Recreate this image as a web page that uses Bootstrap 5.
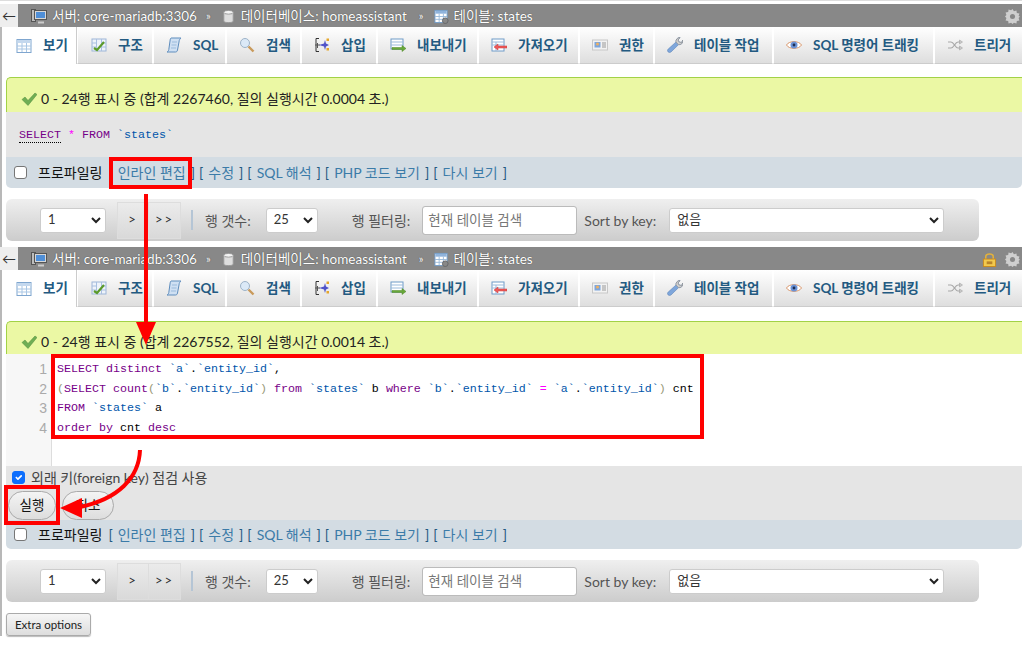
<!DOCTYPE html>
<html lang="ko">
<head>
<meta charset="utf-8">
<title>phpMyAdmin</title>
<link rel="stylesheet" href="https://cdn.jsdelivr.net/npm/bootstrap@5.3.0/dist/css/bootstrap.min.css">
<style>
html,body{height:645px;overflow:hidden;background:#fff}
body{font-family:Lato,"Noto Sans CJK KR",sans-serif;font-size:14px;color:#333;position:relative}
.top-gap{height:4px;background:#fff;border-top:1px solid #ddd}
.crumbs{height:23px;background:#888;color:#fff;font-size:13.5px;white-space:nowrap;text-shadow:0 0 1px #333;padding-top:1px}
.crumb-back{width:18px;height:23px;background:#eee;color:#333;font-size:14px;text-shadow:none;margin-top:-1px}
.crumb-sep{margin:0 10px 0 9px;font-size:11px}
.crumb-item svg{margin-right:5px}
.crumb-first{margin-left:13px}
.crumb-db{margin-right:3px}
.tabs-row{height:37px;border-left:2px solid #b8b8b8;overflow:hidden;white-space:nowrap}
.tab-cell{height:37px;border-right:1px solid #fff;border-left:1px solid #fff;border-bottom:1px solid #ccc;background:linear-gradient(#fff,#dedede);font-weight:700;color:#235a81;font-size:13.5px;flex:none}
.tab-cell.on{background:#fff;border-bottom:0;border-right:1px solid #ccc}
.tab-cell svg{margin-right:11px}
.w1{width:75px;padding-left:13px}.w2{width:76px;padding-left:13px}.w3{width:73px;padding-left:12px}
.w4{width:75px;padding-left:12px}.w5{width:76px;padding-left:12px}.w6{width:101px;padding-left:12px}
.w7{width:101px;padding-left:12px}.w8{width:75px;padding-left:12px}.w9{width:119px;padding-left:12px}
.w10{width:161px;padding-left:12px}.w11{width:100px;padding-left:12px}
.pane-body{border-left:2px solid #b8b8b8;padding-left:4px}
.gap-a{height:13px}.gap-b{height:14px}
.okay{height:35px;background:#ebf8a4;border-top:1px solid #a2d246;border-left:1px solid #a2d246;border-radius:5px 0 0 0;color:#222;padding:7px 0 0 14px;white-space:nowrap}
.okay.two{height:33px}
.okay svg{margin-right:4px}
.sqlbox{height:45px;background:#e5e5e5;padding:14px 0 0 13px}
.code{font-family:"Liberation Mono","Noto Sans CJK KR",monospace;font-size:11.67px;line-height:19.7px;white-space:pre;color:#000}
.kw{color:#708}.kw-u{color:#708;border-bottom:1px dotted #000}.op{color:#f0f}.id{color:#05a}.par{color:#997}
.linkbar{height:31px;background:#d3dce3;border-radius:0 0 5px 5px;padding:0 0 0 8px;color:#235a81;white-space:nowrap}
.linkbar.two{height:29px;padding-bottom:1px}
.linkbar .form-check-input{width:13px;height:13px;margin:0 11px 0 0;border-color:#767676;border-radius:3px}
.prof{color:#111;margin-right:6px}
.lnk{color:#3b7ba8;text-decoration:none;margin:0 5px}
.lnk-set{margin-right:4px}
.navform{height:42px;width:973px;background:linear-gradient(#efefef,#ccc);border-radius:6px;padding-left:34px;color:#555;white-space:nowrap}
.gap-c{height:11px}.gap-d{height:6px}
.navform .form-select{height:25px;min-height:25px;padding:0 0 0 7px;font-size:13px;border-radius:3px;border-color:#ccc;color:#333;background-image:url("data:image/svg+xml,%3csvg xmlns='http://www.w3.org/2000/svg' viewBox='0 0 10 7'%3e%3cpath fill='none' stroke='%23222' stroke-width='2' d='M1 1l4 4 4-4'/%3e%3c/svg%3e");background-size:10px 7px;background-position:right 4px center;flex:none}
.sel-a{width:66px;margin-right:11px}
.navform .sel-b{width:52px;margin:0 34px 0 15px}
.navform .sel-c{width:275px;margin-left:13px}
.pager{height:37px;width:32px;background:linear-gradient(#ebebeb,#d9d9d9);border:1px solid #ddd;color:#333;font-size:13px;letter-spacing:2px;padding:0;border-radius:0}
.pager+.pager{border-left:0}
.vline{width:2px;height:20px;background:#b5c5d5;margin:0 12px 0 10px}
.filter{width:155px;height:29px;margin:0 7px 0 12px;font-size:13.5px;border-radius:3px;padding:0 5px;flex:none;border-color:#bbb}
.filter::placeholder{color:#777}
.editor{height:112px;background:#fff}
.gutter{width:46px;background:#f7f7f7;border-right:1px solid #ddd;color:#aaa;text-align:right;padding:6px 4px 0 0;flex:none;font-family:"Liberation Sans",sans-serif;font-size:14px}
.lines{padding:6px 0 0 5px}
.foot{height:54px;background:#e5e5e5}
.fk{height:25px;padding:0 0 3px 6px;color:#444}
.fk .form-check-input{width:13px;height:13px;margin:0 6px 0 0;border-radius:3px}
.acts{padding-left:2px}
.act{height:29px;width:48px;border-radius:15px;border:1px solid #aaa;background:linear-gradient(#f4f4f4,#ddd);color:#111;font-size:13.5px;padding:0;margin-right:6px}
.act.w52{width:52px}
.extra{height:23px;width:85px;border:1px solid #aaa;background:linear-gradient(#f6f6f6,#ddd);color:#222;font-size:11.5px;padding:0;border-radius:3px;box-shadow:0 1px 1px #bbb}
.marks{position:absolute;left:0;top:0;pointer-events:none}
.icons{position:absolute;width:0;height:0}
.tool-r svg{margin-left:8px}
.tool-r{margin-right:2px}
</style>
</head>
<body>
<svg class="icons" aria-hidden="true">
<symbol id="i-table" viewBox="0 0 16 16"><rect x="1" y="1.500" width="14" height="13" fill="#fff" stroke="#7fa6cf"/><rect x="1.500" y="2" width="13" height="3" fill="#c4d8ee"/><path d="M1 8h14M1 11h14M6 5v9M10.500 5v9" stroke="#a9c6e4" fill="none"/></symbol>
<symbol id="i-struct" viewBox="0 0 16 16"><rect x="1" y="2" width="14" height="12" fill="#eef3fa" stroke="#9db6d8"/><path d="M5.500 2v12M10.500 2v12M1 6h4M1 10h4M11 6h4M11 10h4" stroke="#a9c0e0" fill="none"/><path d="M3 11l3 2 7-8" stroke="#5b9a2b" stroke-width="2.200" fill="none"/></symbol>
<symbol id="i-sql" viewBox="0 0 16 16"><path d="M5 1h10c-1 1-2 2-2 4l-1.500 8c-.3 1.500-1 2-2 2H1c1-.5 1.500-1 1.800-2.500L4 4c.2-1.500.3-2.500 1-3z" fill="#cfe0f3" stroke="#5f8dbd"/><path d="M6 5h5M5.500 8h5M5 11h5" stroke="#9bbbdc"/></symbol>
<symbol id="i-search" viewBox="0 0 16 16"><circle cx="6" cy="6" r="4.500" fill="#dbe9f7" stroke="#9db3c8"/><path d="M9.500 9.500l5 5" stroke="#c99a5b" stroke-width="2.400"/></symbol>
<symbol id="i-insert" viewBox="0 0 16 16"><path d="M5 1.500H2v13h3" stroke="#333" fill="none"/><path d="M1 8h5M3.500 6v5" stroke="#555"/><path d="M11 3l1 3.500 3 1.500-3 1.500-1 3.500-1-3.500L5 8l5-1.500z" fill="#4f52c8"/><rect x="12.500" y="1.500" width="2.500" height="2.500" fill="#e5a72d"/><rect x="12.500" y="11" width="2.500" height="2.500" fill="#e5a72d"/></symbol>
<symbol id="i-export" viewBox="0 0 16 16"><rect x="1" y="2" width="12" height="10" fill="#fff" stroke="#6f9bc8"/><path d="M1 5h12M1 8h12" stroke="#9bbbdc"/><path d="M2 10.500h10V8.500l4 3-4 3v-2H2z" fill="#68a83a" stroke="#4c8626" stroke-width=".5"/></symbol>
<symbol id="i-import" viewBox="0 0 16 16"><rect x="1" y="2" width="12" height="12" fill="#fff" stroke="#6f9bc8"/><path d="M1 5h12M1 8h12M5 5v9" stroke="#9bbbdc"/><path d="M16 9H7V7l-4 3 4 3v-2h9z" fill="#ef5a5a" stroke="#c93a3a" stroke-width=".5"/></symbol>
<symbol id="i-card" viewBox="0 0 16 16"><rect x="0.500" y="3" width="15" height="10" fill="#f2f2f2" stroke="#c8c8c8"/><rect x="2.500" y="5" width="6" height="5.500" fill="#7ea6db"/><circle cx="5.500" cy="7" r="1.500" fill="#f0b060"/><path d="M10 6h4M10 8h4M10 10h4" stroke="#999"/></symbol>
<symbol id="i-wrench" viewBox="0 0 16 16"><path d="M2.500 15.500c-1 0-2-1-2-2 0-.6.300-1 .7-1.400L9 5c-.3-2 1-4.500 4-4.500l-2 2.500 1 2 2.500.5L16 3c.3 3-2 5-4.500 4.700l-7.500 7.300c-.4.300-1 .5-1.500.5z" fill="#7ea6db" stroke="#5f86b8" stroke-width=".6"/><path d="M9 5c-.3-2 1-4.500 4-4.500l-2 2.500 1 2 2.500.5L16 3c.3 3-2 5-4.500 4.700z" fill="#cfcfcf" stroke="#8a8a8a" stroke-width=".6"/></symbol>
<symbol id="i-eye" viewBox="0 0 16 16"><path d="M.5 8C3 3.500 13 3.500 15.500 8 13 12.500 3 12.500.5 8z" fill="#fff" stroke="#d9966a"/><circle cx="8" cy="8" r="3.500" fill="#6c93d6"/><circle cx="8" cy="8" r="1.400" fill="#1d2f55"/></symbol>
<symbol id="i-shuffle" viewBox="0 0 16 16"><path d="M1 5h3c3 0 4 6 7 6h2M1 11h3c3 0 4-6 7-6h2" stroke="#a8a8a8" stroke-width="1.200" fill="none"/><path d="M12.500 3l3 2-3 2zM12.500 9l3 2-3 2z" fill="#ccc" stroke="#999" stroke-width=".5"/></symbol>
<symbol id="i-server" viewBox="0 0 16 16"><rect x="0.500" y="1.500" width="4" height="12" fill="#bdbdbd" stroke="#555"/><rect x="3.500" y="2.500" width="12" height="9" fill="#d7d7d7" stroke="#555"/><rect x="5" y="4" width="9" height="6" fill="#4f8fd8"/><path d="M7 14.500h6" stroke="#ccc" stroke-width="2"/></symbol>
<symbol id="i-db" viewBox="0 0 16 16"><path d="M3 3v10c0 2 10 2 10 0V3z" fill="#dedede" stroke="#999"/><ellipse cx="8" cy="3.500" rx="5" ry="2" fill="#f4f4f4" stroke="#999"/></symbol>
<symbol id="i-tbl2" viewBox="0 0 16 16"><rect x="1" y="1.500" width="13" height="13" fill="#fff" stroke="#6f9bc8"/><rect x="1.500" y="2" width="12" height="3" fill="#8fb3dc"/><path d="M1 8h13M1 11h13M5.500 5v9M10 5v9" stroke="#9bbbdc"/><circle cx="12" cy="12.500" r="3" fill="#888" stroke="#666"/></symbol>
<symbol id="i-gear" viewBox="0 0 16 16"><path d="M8 0l1.500 2.400 2.700-.9.400 2.800 2.800.4-.9 2.700L16 8l-1.500 1.600.9 2.700-2.800.4-.4 2.800-2.700-.9L8 16l-1.500-1.400-2.700.9-.4-2.800-2.800-.4.900-2.700L0 8l1.500-1.600-.9-2.700 2.800-.4.400-2.800 2.700.9z" fill="#cfcfcf"/><circle cx="8" cy="8" r="2.700" fill="#888"/></symbol>
<symbol id="i-lock" viewBox="0 0 16 16"><path d="M4 8V5c0-4 8-4 8 0v3" fill="none" stroke="#e3b23c" stroke-width="1.600"/><rect x="1.500" y="7.500" width="13" height="8" fill="#f2c94c" stroke="#c98a1e"/><rect x="5" y="10" width="6" height="3" fill="#b9842a"/></symbol>
<symbol id="i-ok" viewBox="0 0 16 16"><path d="M1 8.500l3-2.500 3 3.500L14 2l2 1.500-9 11z" fill="#6fae54" stroke="#4f8a3a" stroke-width=".5"/></symbol>
</svg>

<div class="top-gap"></div>
<div class="crumbs d-flex align-items-center">
  <div class="crumb-back d-flex align-items-center justify-content-center">←</div>
  <div class="crumb-item crumb-first d-flex align-items-center"><svg width="16" height="16"><use href="#i-server"/></svg>서버: core-mariadb:3306</div>
  <span class="crumb-sep">»</span>
  <div class="crumb-item crumb-db d-flex align-items-center"><svg width="15" height="15"><use href="#i-db"/></svg>데이터베이스: homeassistant</div>
  <span class="crumb-sep">»</span>
  <div class="crumb-item d-flex align-items-center"><svg width="15" height="15"><use href="#i-tbl2"/></svg>테이블: states</div>
  <div class="tool-r ms-auto d-flex align-items-center"><svg width="15" height="15"><use href="#i-gear"/></svg></div>
</div>
<nav class="tabs-row d-flex">
  <div class="tab-cell on w1 d-flex align-items-center"><svg width="16" height="16"><use href="#i-table"/></svg>보기</div>
  <div class="tab-cell w2 d-flex align-items-center"><svg width="16" height="16"><use href="#i-struct"/></svg>구조</div>
  <div class="tab-cell w3 d-flex align-items-center"><svg width="16" height="16"><use href="#i-sql"/></svg>SQL</div>
  <div class="tab-cell w4 d-flex align-items-center"><svg width="16" height="16"><use href="#i-search"/></svg>검색</div>
  <div class="tab-cell w5 d-flex align-items-center"><svg width="16" height="16"><use href="#i-insert"/></svg>삽입</div>
  <div class="tab-cell w6 d-flex align-items-center"><svg width="16" height="16"><use href="#i-export"/></svg>내보내기</div>
  <div class="tab-cell w7 d-flex align-items-center"><svg width="16" height="16"><use href="#i-import"/></svg>가져오기</div>
  <div class="tab-cell w8 d-flex align-items-center"><svg width="16" height="16"><use href="#i-card"/></svg>권한</div>
  <div class="tab-cell w9 d-flex align-items-center"><svg width="16" height="16"><use href="#i-wrench"/></svg>테이블 작업</div>
  <div class="tab-cell w10 d-flex align-items-center"><svg width="16" height="16"><use href="#i-eye"/></svg>SQL 명령어 트래킹</div>
  <div class="tab-cell w11 d-flex align-items-center"><svg width="16" height="16"><use href="#i-shuffle"/></svg>트리거</div>
</nav>
<div class="pane-body">
  <div class="gap-a"></div>
  <div class="okay d-flex align-items-center"><svg width="16" height="16"><use href="#i-ok"/></svg>0 - 24행 표시 중 (합계 2267460, 질의 실행시간 0.0004 초.)</div>
  <div class="sqlbox code"><span class="kw-u">SELECT</span> <span class="op">*</span> <span class="kw">FROM</span> <span class="id">`states`</span></div>
  <div class="linkbar d-flex align-items-center"><input class="form-check-input" type="checkbox" aria-label="프로파일링"><span class="prof">프로파일링</span><span class="lnk-set">[<a class="lnk" href="#">인라인 편집</a>]</span><span class="lnk-set">[<a class="lnk" href="#">수정</a>]</span><span class="lnk-set">[<a class="lnk" href="#">SQL 해석</a>]</span><span class="lnk-set">[<a class="lnk" href="#">PHP 코드 보기</a>]</span><span class="lnk-set">[<a class="lnk" href="#">다시 보기</a>]</span></div>
  <div class="gap-c"></div>
  <div class="navform d-flex align-items-center">
    <select class="form-select sel-a" aria-label="페이지"><option>1</option></select>
    <button class="pager" type="button">&gt;</button><button class="pager" type="button">&gt;&gt;</button>
    <span class="vline"></span><span>행 갯수:</span>
    <select class="form-select sel-b" aria-label="행 갯수"><option>25</option></select>
    <span>행 필터링:</span>
    <input class="form-control filter" placeholder="현재 테이블 검색">
    <span>Sort by key:</span>
    <select class="form-select sel-c" aria-label="Sort by key"><option>없음</option></select>
  </div>
  <div class="gap-d"></div>
</div>

<div class="crumbs d-flex align-items-center">
  <div class="crumb-back d-flex align-items-center justify-content-center">←</div>
  <div class="crumb-item crumb-first d-flex align-items-center"><svg width="16" height="16"><use href="#i-server"/></svg>서버: core-mariadb:3306</div>
  <span class="crumb-sep">»</span>
  <div class="crumb-item crumb-db d-flex align-items-center"><svg width="15" height="15"><use href="#i-db"/></svg>데이터베이스: homeassistant</div>
  <span class="crumb-sep">»</span>
  <div class="crumb-item d-flex align-items-center"><svg width="15" height="15"><use href="#i-tbl2"/></svg>테이블: states</div>
  <div class="tool-r ms-auto d-flex align-items-center"><svg width="15" height="15"><use href="#i-lock"/></svg><svg width="15" height="15"><use href="#i-gear"/></svg></div>
</div>
<nav class="tabs-row d-flex">
  <div class="tab-cell on w1 d-flex align-items-center"><svg width="16" height="16"><use href="#i-table"/></svg>보기</div>
  <div class="tab-cell w2 d-flex align-items-center"><svg width="16" height="16"><use href="#i-struct"/></svg>구조</div>
  <div class="tab-cell w3 d-flex align-items-center"><svg width="16" height="16"><use href="#i-sql"/></svg>SQL</div>
  <div class="tab-cell w4 d-flex align-items-center"><svg width="16" height="16"><use href="#i-search"/></svg>검색</div>
  <div class="tab-cell w5 d-flex align-items-center"><svg width="16" height="16"><use href="#i-insert"/></svg>삽입</div>
  <div class="tab-cell w6 d-flex align-items-center"><svg width="16" height="16"><use href="#i-export"/></svg>내보내기</div>
  <div class="tab-cell w7 d-flex align-items-center"><svg width="16" height="16"><use href="#i-import"/></svg>가져오기</div>
  <div class="tab-cell w8 d-flex align-items-center"><svg width="16" height="16"><use href="#i-card"/></svg>권한</div>
  <div class="tab-cell w9 d-flex align-items-center"><svg width="16" height="16"><use href="#i-wrench"/></svg>테이블 작업</div>
  <div class="tab-cell w10 d-flex align-items-center"><svg width="16" height="16"><use href="#i-eye"/></svg>SQL 명령어 트래킹</div>
  <div class="tab-cell w11 d-flex align-items-center"><svg width="16" height="16"><use href="#i-shuffle"/></svg>트리거</div>
</nav>
<div class="pane-body">
  <div class="gap-b"></div>
  <div class="okay two d-flex align-items-center"><svg width="16" height="16"><use href="#i-ok"/></svg>0 - 24행 표시 중 (합계 2267552, 질의 실행시간 0.0014 초.)</div>
  <div class="editor d-flex code">
    <div class="gutter">1
2
3
4</div>
    <div class="lines"><span class="kw">SELECT</span> <span class="kw">distinct</span> <span class="id">`a`</span>.<span class="id">`entity_id`</span>,
<span class="par">(</span><span class="kw">SELECT</span> <span class="kw">count</span><span class="par">(</span><span class="id">`b`</span>.<span class="id">`entity_id`</span><span class="par">)</span> <span class="kw">from</span> <span class="id">`states`</span> b <span class="kw">where</span> <span class="id">`b`</span>.<span class="id">`entity_id`</span> <span class="op">=</span> <span class="id">`a`</span>.<span class="id">`entity_id`</span><span class="par">)</span> cnt
<span class="kw">FROM</span> <span class="id">`states`</span> a
<span class="kw">order</span> <span class="kw">by</span> cnt <span class="kw">desc</span></div>
  </div>
  <div class="foot">
    <div class="fk d-flex align-items-center"><input class="form-check-input" type="checkbox" checked aria-label="외래 키"><span>외래 키(foreign key) 점검 사용</span></div>
    <div class="acts d-flex"><button class="act" type="button">실행</button><button class="act w52" type="button">취소</button></div>
  </div>
  <div class="linkbar two d-flex align-items-center"><input class="form-check-input" type="checkbox" aria-label="프로파일링"><span class="prof">프로파일링</span><span class="lnk-set">[<a class="lnk" href="#">인라인 편집</a>]</span><span class="lnk-set">[<a class="lnk" href="#">수정</a>]</span><span class="lnk-set">[<a class="lnk" href="#">SQL 해석</a>]</span><span class="lnk-set">[<a class="lnk" href="#">PHP 코드 보기</a>]</span><span class="lnk-set">[<a class="lnk" href="#">다시 보기</a>]</span></div>
  <div class="gap-c"></div>
  <div class="navform d-flex align-items-center">
    <select class="form-select sel-a" aria-label="페이지"><option>1</option></select>
    <button class="pager" type="button">&gt;</button><button class="pager" type="button">&gt;&gt;</button>
    <span class="vline"></span><span>행 갯수:</span>
    <select class="form-select sel-b" aria-label="행 갯수"><option>25</option></select>
    <span>행 필터링:</span>
    <input class="form-control filter" placeholder="현재 테이블 검색">
    <span>Sort by key:</span>
    <select class="form-select sel-c" aria-label="Sort by key"><option>없음</option></select>
  </div>
  <div class="gap-c"></div>
  <button class="extra" type="button">Extra options</button>
</div>

<svg class="marks" width="1022" height="645" viewBox="0 0 1022 645" aria-hidden="true">
  <g fill="none" stroke="#f00" stroke-width="4">
    <rect x="111" y="159" width="79" height="28"/>
    <rect x="53" y="356" width="649" height="81"/>
    <rect x="6" y="487" width="52" height="36"/>
  </g>
  <path d="M146 194V326" stroke="#f00" stroke-width="4" fill="none"/>
  <path d="M136 322H156L146 345z" fill="#f00"/>
  <path d="M140 450C139 478 118 499 80 507" stroke="#f00" stroke-width="4" fill="none"/>
  <path d="M82 498L60 508L82 518z" fill="#f00"/>
</svg>
<script src="https://cdn.jsdelivr.net/npm/bootstrap@5.3.0/dist/js/bootstrap.bundle.min.js"></script>
</body>
</html>
